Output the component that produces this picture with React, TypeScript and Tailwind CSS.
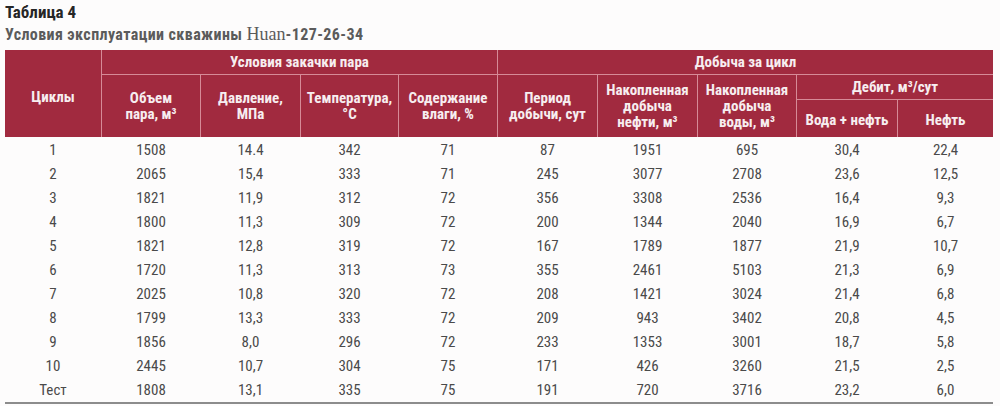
const narrow = "font-['Liberation_Sans_Narrow','Arial_Narrow','Roboto_Condensed',sans-serif]"

const cols = "grid grid-cols-[96px_98px_99px_97px_98px_99px_99px_98px_100px_95px] gap-x-px"

const rows: string[][] = [
  ["1", "1508", "14.4", "342", "71", "87", "1951", "695", "30,4", "22,4"],
  ["2", "2065", "15,4", "333", "71", "245", "3077", "2708", "23,6", "12,5"],
  ["3", "1821", "11,9", "312", "72", "356", "3308", "2536", "16,4", "9,3"],
  ["4", "1800", "11,3", "309", "72", "200", "1344", "2040", "16,9", "6,7"],
  ["5", "1821", "12,8", "319", "72", "167", "1789", "1877", "21,9", "10,7"],
  ["6", "1720", "11,3", "313", "73", "355", "2461", "5103", "21,3", "6,9"],
  ["7", "2025", "10,8", "320", "72", "208", "1421", "3024", "21,4", "6,8"],
  ["8", "1799", "13,3", "333", "72", "209", "943", "3402", "20,8", "4,5"],
  ["9", "1856", "8,0", "296", "72", "233", "1353", "3001", "18,7", "5,8"],
  ["10", "2445", "10,7", "304", "75", "171", "426", "3260", "21,5", "2,5"],
  ["Тест", "1808", "13,1", "335", "75", "191", "720", "3716", "23,2", "6,0"],
]

const HeadCell = ({ className = "", children }: { className?: string; children: React.ReactNode }) => (
  <div className={"flex items-center justify-center bg-[#a12a3f] text-center text-[15px] font-bold leading-[16px] text-[#f7eef0] " + className}>
    <div>{children}</div>
  </div>
)

export default function App() {
  return (
    <div className={"h-[406px] w-[1000px] bg-[#fdfcfc] px-[5px] pt-[3px] " + narrow}>
      <div className="text-[17px] font-bold leading-[19px] text-[#262626]">Таблица 4</div>
      <div className="mt-[2px] text-[16px] font-bold leading-[20px] tracking-[0.4px] text-[#5b5b5b]">
        Условия эксплуатации скважины{" "}
        <span className="font-['Liberation_Serif',serif] text-[18px] font-normal tracking-normal">Huan</span>
        <span>-127-26-34</span>
      </div>

      <div className="mt-[5px] w-[988px]">
        {/* header */}
        <div className={cols + " grid-rows-[24px_24px_37px] gap-y-px bg-[#d68a97]"}>
          <HeadCell className="row-span-3 pt-[6px]">Циклы</HeadCell>
          <HeadCell className="col-span-4">Условия закачки пара</HeadCell>
          <HeadCell className="col-span-5">Добыча за цикл</HeadCell>

          <HeadCell className="col-start-2 row-span-2">Объем<br />пара, м³</HeadCell>
          <HeadCell className="row-span-2">Давление,<br />МПа</HeadCell>
          <HeadCell className="row-span-2">Температура,<br />°С</HeadCell>
          <HeadCell className="row-span-2">Содержание<br />влаги, %</HeadCell>
          <HeadCell className="row-span-2">Период<br />добычи, сут</HeadCell>
          <HeadCell className="row-span-2">Накопленная<br />добыча<br />нефти, м³</HeadCell>
          <HeadCell className="row-span-2">Накопленная<br />добыча<br />воды, м³</HeadCell>
          <HeadCell className="col-span-2">Дебит, м³/сут</HeadCell>

          <HeadCell className="col-start-9 pt-[3px]">Вода + нефть</HeadCell>
          <HeadCell className="pt-[3px]">Нефть</HeadCell>
        </div>

        {/* body */}
        <div className="border-b-2 border-[#8c8c8c] pt-[1px]">
          {rows.map((r, i) => (
            <div key={i} className={cols + " h-[24px] items-center text-[15px] text-[#4a4a4a]"}>
              {r.map((v, j) => (
                <div key={j} className="text-center">{v}</div>
              ))}
            </div>
          ))}
        </div>
      </div>
    </div>
  )
}
